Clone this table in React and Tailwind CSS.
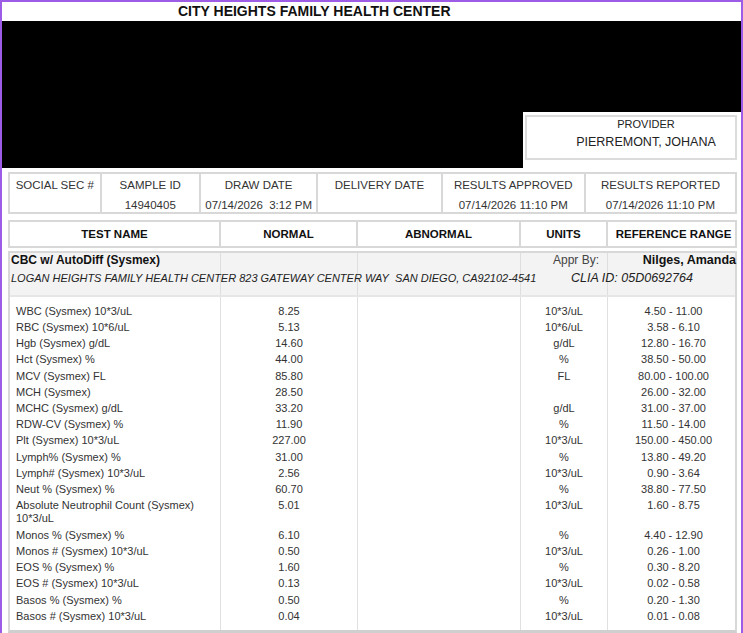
import React from 'react';

const cols = 'grid grid-cols-[211px_137px_163px_87px_131px]';

const info = [
  { label: 'SOCIAL SEC #', value: '', w: 'w-[92px]' },
  { label: 'SAMPLE ID', value: '14940405', w: 'w-[100px]' },
  { label: 'DRAW DATE', value: '07/14/2026\u00a0\u00a03:12 PM', w: 'w-[118px]' },
  { label: 'DELIVERY DATE', value: '', w: 'w-[125px]' },
  { label: 'RESULTS APPROVED', value: '07/14/2026 11:10 PM', w: 'w-[144px]' },
  { label: 'RESULTS REPORTED', value: '07/14/2026 11:10 PM', w: 'w-[150px]' },
];

const results = [
  ['WBC (Sysmex) 10*3/uL', '8.25', '10*3/uL', '4.50 - 11.00'],
  ['RBC (Sysmex) 10*6/uL', '5.13', '10*6/uL', '3.58 - 6.10'],
  ['Hgb (Sysmex) g/dL', '14.60', 'g/dL', '12.80 - 16.70'],
  ['Hct (Sysmex) %', '44.00', '%', '38.50 - 50.00'],
  ['MCV (Sysmex) FL', '85.80', 'FL', '80.00 - 100.00'],
  ['MCH (Sysmex)', '28.50', '', '26.00 - 32.00'],
  ['MCHC (Sysmex) g/dL', '33.20', 'g/dL', '31.00 - 37.00'],
  ['RDW-CV (Sysmex) %', '11.90', '%', '11.50 - 14.00'],
  ['Plt (Sysmex) 10*3/uL', '227.00', '10*3/uL', '150.00 - 450.00'],
  ['Lymph% (Sysmex) %', '31.00', '%', '13.80 - 49.20'],
  ['Lymph# (Sysmex) 10*3/uL', '2.56', '10*3/uL', '0.90 - 3.64'],
  ['Neut % (Sysmex) %', '60.70', '%', '38.80 - 77.50'],
  ['Absolute Neutrophil Count (Sysmex) 10*3/uL', '5.01', '10*3/uL', '1.60 - 8.75'],
  ['Monos % (Sysmex) %', '6.10', '%', '4.40 - 12.90'],
  ['Monos # (Sysmex) 10*3/uL', '0.50', '10*3/uL', '0.26 - 1.00'],
  ['EOS % (Sysmex) %', '1.60', '%', '0.30 - 8.20'],
  ['EOS # (Sysmex) 10*3/uL', '0.13', '10*3/uL', '0.02 - 0.58'],
  ['Basos % (Sysmex) %', '0.50', '%', '0.20 - 1.30'],
  ['Basos # (Sysmex) 10*3/uL', '0.04', '10*3/uL', '0.01 - 0.08'],
];

function ResultRow({ name = '', normal = '', units = '', range = '', spacer }) {
  const cell = spacer ? 'h-[6px]' : 'pt-[1.6px] pb-[1.65px] leading-[13px]';
  return (
    <div className={`${cols} text-[11px] text-[#333]`}>
      <div className={`${cell} pl-[6px] pr-[10px] border-r border-[#e0e0e0]`}>{name}</div>
      <div className={`${cell} text-center border-r border-[#e0e0e0]`}>{normal}</div>
      <div className={`${cell} border-r border-[#e0e0e0]`}></div>
      <div className={`${cell} text-center border-r border-[#e0e0e0]`}>{units}</div>
      <div className={`${cell} text-center`}>{range}</div>
    </div>
  );
}

export default function App() {
  return (
    <div className="w-[743px] h-[633px] overflow-hidden bg-white border-t-2 border-x-2 border-[#9d5ce6] font-['Liberation_Sans',Arial,sans-serif] text-black">
      {/* title */}
      <div className="h-[19px] pl-[176px] text-[14px] font-bold leading-[19px] text-[#111]">
        CITY HEIGHTS FAMILY HEALTH CENTER
      </div>

      {/* redacted header block */}
      <div className="h-[91px] bg-black"></div>
      <div className="flex h-[56px]">
        <div className="w-[521px] bg-black"></div>
        <div className="pl-[2px] pt-[3px]">
          <div className="w-[212px] h-[45px] border-2 border-[#dcdcdc] flex flex-col items-center">
            <div className="text-[11px] leading-[14px] pl-[30px] text-[#222]">PROVIDER</div>
            <div className="text-[12.5px] leading-[16px] mt-[3px] pl-[30px] text-[#222]">PIERREMONT, JOHANA</div>
          </div>
        </div>
      </div>

      {/* sample info */}
      <div className="ml-[6px] mr-[4px] mt-[4px] h-[42px] flex border-2 border-[#d8d8d8] text-[11.5px] text-[#333]">
        {info.map((c, i) => (
          <div
            key={c.label}
            className={`${c.w} flex flex-col items-center pt-[4px] ${i < info.length - 1 ? 'border-r-2 border-[#d8d8d8]' : ''}`}
          >
            <div className="leading-[14px]">{c.label}</div>
            <div className="leading-[14px] mt-[6px]">{c.value}</div>
          </div>
        ))}
      </div>

      {/* column headers */}
      <div className={`${cols} ml-[6px] mr-[4px] mt-[6px] h-[28px] border-2 border-[#d8d8d8] text-[11.5px] font-bold text-[#111]`}>
        <div className="flex items-center justify-center pt-[2px] border-r-2 border-[#d8d8d8]">TEST NAME</div>
        <div className="flex items-center justify-center pt-[2px] border-r-2 border-[#d8d8d8]">NORMAL</div>
        <div className="flex items-center justify-center pt-[2px] border-r-2 border-[#d8d8d8]">ABNORMAL</div>
        <div className="flex items-center justify-center pt-[2px] border-r-2 border-[#d8d8d8]">UNITS</div>
        <div className="flex items-center justify-center pt-[2px]">REFERENCE RANGE</div>
      </div>

      {/* group band */}
      <div className="ml-[6px] mr-[4px] mt-[3px] border-2 border-b-0 border-[#d8d8d8]">
        <div className={`${cols} grid-rows-[18px_24px] bg-[#f3f3f3]`}>
          <div className="col-start-1 row-start-1 row-span-2 border-r border-[#dedede]"></div>
          <div className="col-start-2 row-start-1 row-span-2 border-r border-[#dedede]"></div>
          <div className="col-start-3 row-start-1 row-span-2 border-r border-[#dedede]"></div>
          <div className="col-start-4 row-start-1 row-span-2 border-r border-[#dedede]"></div>

          <div className="col-start-1 row-start-1 pl-[1px] text-[12px] font-bold leading-[14px] text-[#111]">
            CBC w/ AutoDiff (Sysmex)
          </div>
          <div className="col-start-4 row-start-1 pr-[9px] text-right text-[12px] leading-[14px] text-[#444]">
            Appr By:
          </div>
          <div className="col-start-5 row-start-1 pr-[3px] text-right text-[12.5px] font-bold leading-[14px] text-[#111]">
            Nilges, Amanda
          </div>
          <div className="col-start-1 col-span-4 row-start-2 pl-[1px] text-[11px] italic leading-[14px] text-[#222] whitespace-nowrap">
            LOGAN HEIGHTS FAMILY HEALTH CENTER 823 GATEWAY CENTER WAY&nbsp; SAN DIEGO, CA92102-4541
          </div>
          <div className="col-start-4 col-span-2 row-start-2 pl-[50px] text-[12.5px] italic leading-[14px] text-[#222] whitespace-nowrap">
            CLIA ID: 05D0692764
          </div>
        </div>
      </div>

      {/* results */}
      <div className="ml-[6px] mr-[4px] border-2 border-t-0 border-[#d8d8d8] border-b-[3px] border-b-[#cfcfcf] bg-white">
        <div className="h-[2px] bg-[#e6e6e6]"></div>
        <ResultRow spacer />
        {results.map((r) => (
          <ResultRow key={r[0]} name={r[0]} normal={r[1]} units={r[2]} range={r[3]} />
        ))}
        <ResultRow spacer />
      </div>
    </div>
  );
}
